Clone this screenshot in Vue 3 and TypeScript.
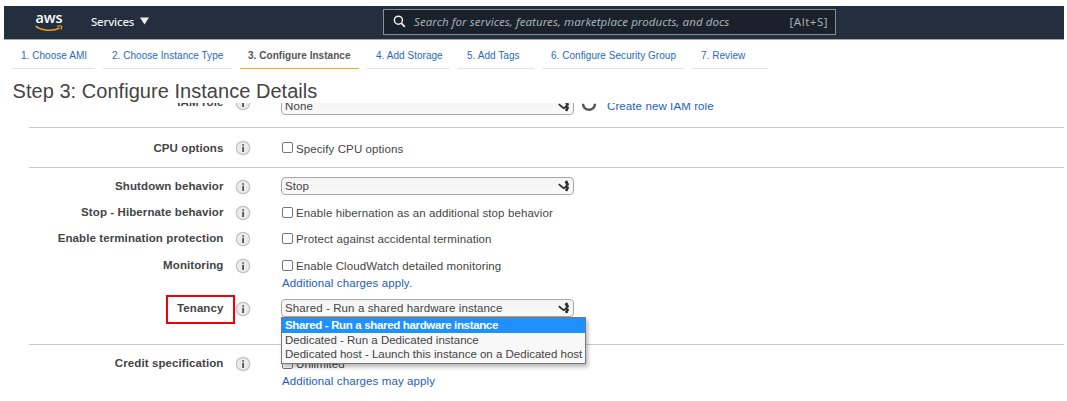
<script setup lang="ts">
import { ref } from 'vue'

interface Tab { label: string; key: string; active?: boolean }

const tabs: Tab[] = [
  { label: '1. Choose AMI', key: 't1' },
  { label: '2. Choose Instance Type', key: 't2' },
  { label: '3. Configure Instance', key: 't3', active: true },
  { label: '4. Add Storage', key: 't4' },
  { label: '5. Add Tags', key: 't5' },
  { label: '6. Configure Security Group', key: 't6' },
  { label: '7. Review', key: 't7' },
]

interface Row {
  key: string
  label: string
  select?: string
  check?: string
  link?: string
  divider?: boolean
}

const rows: Row[] = [
  { key: 'iam', label: 'IAM role', select: 'None' },
  { key: 'cpu', label: 'CPU options', check: 'Specify CPU options', divider: true },
  { key: 'shutdown', label: 'Shutdown behavior', select: 'Stop', divider: true },
  { key: 'hibernate', label: 'Stop - Hibernate behavior', check: 'Enable hibernation as an additional stop behavior' },
  { key: 'protect', label: 'Enable termination protection', check: 'Protect against accidental termination' },
  { key: 'monitor', label: 'Monitoring', check: 'Enable CloudWatch detailed monitoring', link: 'Additional charges apply.' },
  { key: 'tenancy', label: 'Tenancy', select: 'Shared - Run a shared hardware instance' },
  { key: 'credit', label: 'Credit specification', check: 'Unlimited', link: 'Additional charges may apply', divider: true },
]

const options = [
  'Shared - Run a shared hardware instance',
  'Dedicated - Run a Dedicated instance',
  'Dedicated host - Launch this instance on a Dedicated host',
]
const selected = ref(0)
</script>

<template>
  <div class="page">
    <header class="top">
      <div class="logo">
        <span class="logo-text">aws</span>
        <svg class="smile" viewBox="0 0 28 7" width="28" height="7">
          <path d="M.6 1.2C7 6 18 6.6 24.5 3" fill="none" stroke="#f59a23" stroke-width="1.6" />
          <path d="M22 1.4c2-.6 4.4-.6 4.7 0 .3.7-.2 2-1 3" fill="none" stroke="#f59a23" stroke-width="1.2" />
        </svg>
      </div>
      <div class="services">
        <span>Services</span>
        <svg viewBox="0 0 9 8" width="9" height="8"><path d="M0 .5h9L4.5 7.6z" fill="#eee" /></svg>
      </div>
      <div class="search">
        <svg viewBox="0 0 13 13" width="13" height="13">
          <circle cx="5.4" cy="5.2" r="4" fill="none" stroke="#eee" stroke-width="1.5" />
          <path d="M8.3 8.2l3.5 3.6" stroke="#eee" stroke-width="1.8" />
        </svg>
        <span class="hint">Search for services, features, marketplace products, and docs</span>
        <span class="keys">[Alt+S]</span>
      </div>
    </header>

    <nav class="tabs">
      <div v-for="t in tabs" :key="t.key" class="tab" :class="[t.key, { active: t.active }]">{{ t.label }}</div>
    </nav>

    <h1 class="title">Step 3: Configure Instance Details</h1>

    <main class="viewport">
      <div class="form">
        <div v-for="r in rows" :key="r.key" class="row" :class="[r.key, { divider: r.divider }]">
          <div class="label">
            <span>{{ r.label }}</span>
            <i v-if="r.key === 'tenancy'" class="mark"></i>
          </div>
          <svg class="info" viewBox="0 0 16 16" width="16" height="16">
            <circle cx="8" cy="8" r="6.7" fill="#ebebeb" stroke="#c2c2c2" stroke-width="1.2" />
            <path d="M7.2 4.2h1.8v1.6H7.2zM7.2 6.8h1.8v5.2H7.2z" fill="#555" />
          </svg>
          <div class="control">
            <div v-if="r.select" class="line">
              <div class="select">
                <span>{{ r.select }}</span>
                <svg viewBox="0 0 12 12" width="12" height="12">
                  <path d="M.8 4.2c1.6 1.6 3 2.8 5 4L9.4 5.4" fill="none" stroke="#333" stroke-width="1.9" />
                  <path d="M8.6 2.4v7.4" stroke="#333" stroke-width="1.6" />
                  <circle cx="8.5" cy="2.2" r="1.6" fill="#333" />
                  <circle cx="9.7" cy="4.4" r="1.3" fill="#333" />
                  <circle cx="9.6" cy="8" r="1.4" fill="#333" />
                  <circle cx="8.6" cy="9.8" r="1.5" fill="#333" />
                </svg>
                <div v-if="r.key === 'tenancy'" class="menu">
                  <div v-for="(o, i) in options" :key="o" class="option" :class="{ on: i === selected }" @click="selected = i">{{ o }}</div>
                </div>
              </div>
              <template v-if="r.key === 'iam'">
                <svg class="refresh" viewBox="0 0 16 16" width="16" height="16">
                  <path d="M2 5.8a6 6 0 0 0 12 0" fill="none" stroke="#555" stroke-width="2.4" />
                </svg>
                <a class="link">Create new IAM role</a>
              </template>
            </div>
            <div v-if="r.check" class="checkline">
              <span class="box"></span><span>{{ r.check }}</span>
            </div>
            <a v-if="r.link" class="link below">{{ r.link }}</a>
          </div>
        </div>
      </div>
    </main>
  </div>
</template>

<style>
body { background: #fff; }
</style>

<style scoped>
* { box-sizing: border-box; }
.page {
  width: 1067px;
  height: 401px;
  padding: 6px 3px 0 4px;
  overflow: hidden;
  background: #fff;
  color: #444;
  font-family: "Liberation Sans", Arial, sans-serif;
  font-size: 11.5px;
  letter-spacing: 0.1px;
  white-space: nowrap;
}
.top {
  display: flex;
  height: 34px;
  background: #232f3e;
  border-bottom: 1px solid #a5a9ae;
  font-family: "Noto Sans", sans-serif;
}
.logo { width: 28px; margin-left: 31px; padding-top: 5px; display: flex; flex-direction: column; align-items: center; }
.logo-text { color: #fff; font: 600 14.5px/14px "Open Sans", sans-serif; letter-spacing: -0.1px; height: 14px; }
.smile { flex: none; }
.services { display: flex; align-items: center; gap: 6px; margin-left: 28px; width: 64px; height: 30px; color: #eee; font-size: 11.5px; font-weight: 500; letter-spacing: -0.2px; }
.search {
  display: flex;
  align-items: center;
  width: 453px;
  height: 26px;
  margin: 3px 0 0 228px;
  padding: 0 7px 1px 9px;
  border: 1px solid #84918f;
  background: #1a212b;
  color: #a3b0b2;
}
.hint { margin-left: 8px; font-style: italic; font-size: 11.5px; letter-spacing: 0.07px; }
.keys { margin-left: auto; font-size: 11.5px; letter-spacing: 0.5px; }
.tabs { display: flex; gap: 8px; height: 29px; padding-left: 8px; font-size: 10px; letter-spacing: 0.04px; line-height: 32px; }
.tab { flex: none; padding-left: 9px; border-bottom: 1px solid #e4e4e4; color: #1f69c0; }
.t1 { width: 83px; }
.t2 { width: 129px; }
.t3 { width: 119px; }
.t4 { width: 83px; }
.t5 { width: 76px; }
.t6 { width: 142px; }
.t7 { width: 76px; }
.tab.active { padding-left: 8px; border-bottom: 1px solid #f8a62f; color: #555; font-weight: 700; }
.title { height: 23px; margin: 11px 0 0 8.5px; font-size: 20px; font-weight: 400; line-height: 23px; letter-spacing: 0.04px; color: #444; }
.viewport { height: 298px; margin: 0 0 0 25px; overflow: hidden; }
.form { margin-top: -9px; }
.row {
  display: grid;
  grid-template-columns: 194.5px 11.5px 16px 30px 1fr;
  line-height: 16px;
  align-items: start;
}
.divider { border-top: 1px solid #c8c8c8; }
.iam { height: 33px; }
.cpu { height: 40px; padding-top: 12px; }
.shutdown { height: 37px; padding-top: 10px; }
.hibernate { height: 26px; }
.protect { height: 27px; }
.monitor { height: 43px; }
.tenancy { height: 44px; }
.credit { padding-top: 10px; }
.label { grid-column: 1; position: relative; text-align: right; font-weight: 700; }
.mark { position: absolute; top: -5px; right: -11px; width: 69px; height: 29px; border: 2px solid #f00008; }
.info { grid-column: 3; margin-top: 1px; display: block; }
.cpu .info { margin-top: 0; }
.control { grid-column: 5; }
.line { display: flex; align-items: center; margin-top: -1px; }
.iam .line { margin-top: 3px; }
.select {
  position: relative;
  display: flex;
  align-items: center;
  justify-content: space-between;
  width: 293px;
  height: 18px;
  padding: 0 3px;
  border: 1px solid #a9a9a9;
  border-radius: 4px;
  background: linear-gradient(#f4f4f4, #f9f9f9);
}
.menu {
  position: absolute;
  z-index: 2;
  left: -1px;
  top: 17px;
  width: 304.5px;
  height: 47px;
  border: 1px solid #777;
  background: #f8f8f8;
  box-shadow: 2px 3px 4px rgba(0, 0, 0, 0.28);
  letter-spacing: 0;
}
.option { height: 14.7px; padding-left: 3px; line-height: 14.5px; }
.option.on { background: #1e90ff; color: #fff; font-weight: 700; letter-spacing: -0.34px; }
.refresh { margin-left: 7px; }
.link { color: #1c60bd; }
.iam .link { margin-left: 10px; }
.below { display: block; margin: 1px 0 0 1px; line-height: 16px; }
.checkline { display: flex; padding: 1px 0 0 1px; line-height: 16px; }
.box { width: 11px; height: 11px; margin: 2px 3px 0 0; border: 1px solid #767676; border-radius: 2px; background: #fff; }
.cpu .box { margin-top: 1px; }
</style>
